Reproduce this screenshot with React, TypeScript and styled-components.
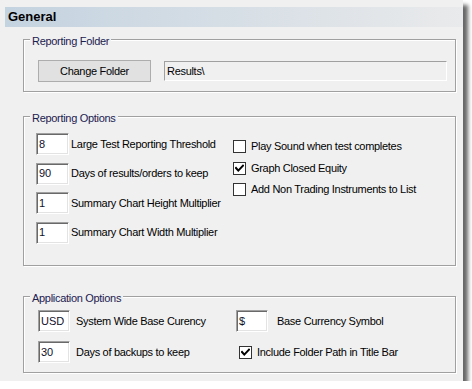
import React from "react";
import styled, { createGlobalStyle } from "styled-components";

const GlobalStyle = createGlobalStyle`
  html, body {
    margin: 0;
    padding: 0;
    background: #ffffff;
  }
  body {
    font-family: "Liberation Sans", Arial, sans-serif;
    font-size: 11px;
    color: #000000;
  }
`;

const Window = styled.div`
  width: 463px;
  height: 381px;
  box-sizing: border-box;
  padding-top: 7px;
  background: #f0f0f0;
  box-shadow: 5px 5px 4px rgba(0, 0, 0, 0.6);
  display: flex;
  flex-direction: column;
`;

const Header = styled.div`
  margin-left: 5px;
  height: 20px;
  padding-left: 3px;
  line-height: 20px;
  background: linear-gradient(to right, #c4d3e0, #e9eaeb);
  font-size: 13px;
  font-weight: bold;
`;

const Group = styled.div<{ $top: number; $height: number }>`
  margin: ${(p) => p.$top}px 0 0 23px;
  width: 433px;
  height: ${(p) => p.$height}px;
  box-sizing: border-box;
  border: 1px solid #a0a0a0;
  box-shadow: inset 1px 1px 0 #ffffff, 1px 1px 0 #ffffff;
  display: flex;
  flex-direction: column;
`;

const Legend = styled.span`
  align-self: flex-start;
  margin: -5px 0 0 6px;
  padding: 0 2px;
  background: #f0f0f0;
  line-height: 13px;
  color: #1c2050;
  letter-spacing: -0.3px;
`;

const FolderRow = styled.div`
  display: flex;
  align-items: center;
  gap: 13px;
  margin-top: 12px;
  padding-left: 14px;
`;

const Button = styled.button`
  width: 113px;
  height: 22px;
  box-sizing: border-box;
  padding: 0;
  border: 1px solid #adadad;
  background: #e1e1e1;
  font-family: inherit;
  font-size: 11px;
  letter-spacing: -0.3px;
  color: #000000;
`;

const PathField = styled.div`
  width: 283px;
  height: 20px;
  box-sizing: border-box;
  padding-left: 2px;
  line-height: 18px;
  border: 1px solid;
  border-color: #a0a0a0 #ffffff #ffffff #a0a0a0;
  letter-spacing: -0.3px;
`;

const OptionsBody = styled.div`
  display: flex;
  margin-top: 8px;
  padding-left: 12px;
`;

const Column = styled.div<{ $width?: number; $top?: number; $gap: number }>`
  display: flex;
  flex-direction: column;
  gap: ${(p) => p.$gap}px;
  ${(p) => (p.$width ? `width: ${p.$width}px;` : "")}
  margin-top: ${(p) => p.$top ?? 0}px;
`;

const Row = styled.div<{ $gap: number; $indent?: number }>`
  display: flex;
  align-items: center;
  gap: ${(p) => p.$gap}px;
  padding-left: ${(p) => p.$indent ?? 0}px;
  height: 22px;
`;

const CheckRow = styled.div<{ $indent?: number }>`
  display: flex;
  align-items: center;
  gap: 5px;
  height: 13px;
  padding-left: ${(p) => p.$indent ?? 0}px;
`;

const TextBox = styled.input<{ $width: number }>`
  width: ${(p) => p.$width}px;
  height: 22px;
  box-sizing: border-box;
  margin: 0;
  padding: 0 0 1px 2px;
  border: 1px solid;
  border-color: #a0a0a0 #ffffff #ffffff #a0a0a0;
  box-shadow: inset 1px 1px 0 #696969, inset -1px -1px 0 #e3e3e3;
  background: #ffffff;
  font-family: inherit;
  font-size: 11px;
  color: #10102a;
  outline: none;
`;

const Label = styled.span`
  line-height: 13px;
  white-space: nowrap;
  letter-spacing: -0.3px;
`;

const Box = styled.span`
  width: 13px;
  height: 13px;
  box-sizing: border-box;
  border: 1px solid #333333;
  background: #ffffff;
  display: flex;
  align-items: center;
  justify-content: center;
  flex-shrink: 0;
`;

const AppGrid = styled.div`
  display: grid;
  grid-template-columns: 198px auto;
  row-gap: 9px;
  margin-top: 5px;
  padding-left: 14px;
`;

function CheckBox({ checked, label, indent }: { checked?: boolean; label: string; indent?: number }) {
  return (
    <CheckRow $indent={indent}>
      <Box>
        {checked && (
          <svg width="9" height="9" viewBox="0 0 9 9">
            <polyline
              points="1,4 3.3,6.6 8,1.6"
              fill="none"
              stroke="#000"
              strokeWidth="2"
              strokeLinecap="square"
            />
          </svg>
        )}
      </Box>
      <Label>{label}</Label>
    </CheckRow>
  );
}

function Field({ value, label, width = 33, gap = 2 }: { value: string; label: string; width?: number; gap?: number }) {
  return (
    <Row $gap={gap}>
      <TextBox $width={width} readOnly defaultValue={value} />
      <Label>{label}</Label>
    </Row>
  );
}

export default function App() {
  return (
    <>
      <GlobalStyle />
      <Window>
        <Header>General</Header>

        <Group $top={12} $height={53}>
          <Legend>Reporting Folder</Legend>
          <FolderRow>
            <Button>Change Folder</Button>
            <PathField>Results\</PathField>
          </FolderRow>
        </Group>

        <Group $top={24} $height={150}>
          <Legend>Reporting Options</Legend>
          <OptionsBody>
            <Column $width={197} $gap={7.5}>
              <Field value="8" label="Large Test Reporting Threshold" />
              <Field value="90" label="Days of results/orders to keep" />
              <Field value="1" label="Summary Chart Height Multiplier" />
              <Field value="1" label="Summary Chart Width Multiplier" />
            </Column>
            <Column $top={7} $gap={8.5}>
              <CheckBox label="Play Sound when test completes" />
              <CheckBox checked label="Graph Closed Equity" />
              <CheckBox label="Add Non Trading Instruments to List" />
            </Column>
          </OptionsBody>
        </Group>

        <Group $top={30} $height={77}>
          <Legend>Application Options</Legend>
          <AppGrid>
            <Field value="USD" label="System Wide Base Curency" width={32} gap={6} />
            <Field value="$" label="Base Currency Symbol" width={32} gap={9} />
            <Field value="30" label="Days of backups to keep" width={32} gap={6} />
            <Row $gap={0}>
              <CheckBox checked indent={3} label="Include Folder Path in Title Bar" />
            </Row>
          </AppGrid>
        </Group>
      </Window>
    </>
  );
}
